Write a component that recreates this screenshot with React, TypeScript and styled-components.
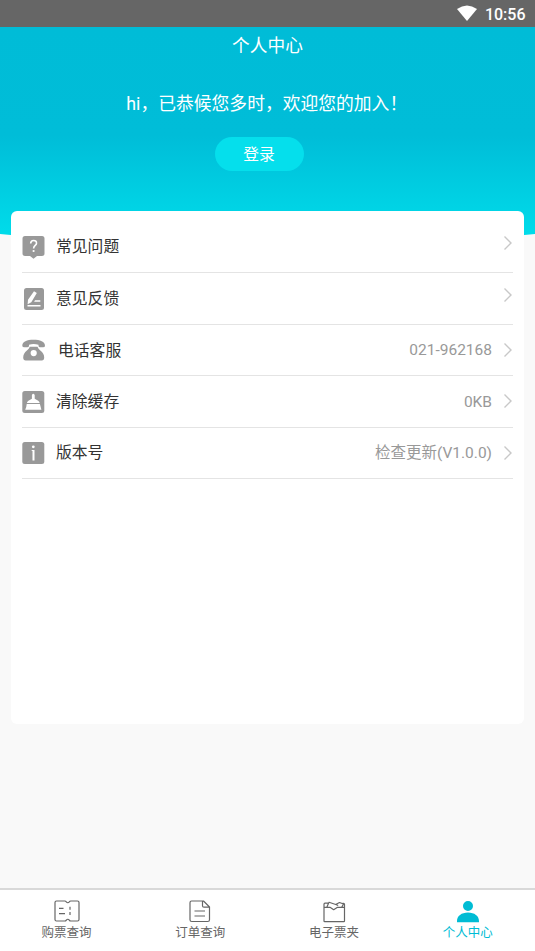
import React from "react";
import styled, { createGlobalStyle } from "styled-components";

const GlobalStyle = createGlobalStyle`
  * { box-sizing: border-box; }
  body {
    margin: 0;
    background: #f9f9f9;
    font-family: Roboto, "Noto Sans CJK SC", sans-serif;
  }
`;

const Screen = styled.div`
  width: 535px;
  height: 951px;
  display: flex;
  flex-direction: column;
  overflow: hidden;
  background: #f9f9f9;
`;

const StatusBar = styled.div`
  height: 27px;
  flex: none;
  display: flex;
  justify-content: flex-end;
  align-items: center;
  gap: 8px;
  padding: 2px 9.5px 0 0;
  background: #666;
  color: #fff;
  font-size: 16px;
  font-weight: 500;
  line-height: 24px;
`;

const WifiIcon = styled.svg`
  width: 20px;
  height: 16px;
  margin-top: -3px;
`;

const Hero = styled.header`
  height: 209px;
  flex: none;
  display: flex;
  flex-direction: column;
  align-items: center;
  background: linear-gradient(#00bcd7 0%, #00bdd8 52%, #00dcea 100%);
  clip-path: polygon(0 0, 100% 0, 100% 207px, 96% 209px, 4% 209px, 0 207px);
  color: #fff;
`;

const Title = styled.h1`
  margin: 6px 0 0;
  font-size: 17.7px;
  line-height: 26px;
  font-weight: 400;
`;

const Greeting = styled.p`
  margin: 32px 0 0;
  padding-right: 1.5px;
  font-size: 17.8px;
  line-height: 26px;
  white-space: nowrap;
`;

const LoginButton = styled.button`
  width: 89px;
  height: 34px;
  margin: 20px 17px 0 0;
  padding: 2px 0 0;
  border: 0;
  border-radius: 17px;
  background: #05dfec;
  color: #fff;
  font-family: inherit;
  font-size: 15.8px;
  line-height: 32px;
`;

const Card = styled.main`
  height: 513px;
  flex: none;
  margin: -25px 11px 0;
  padding: 10.5px 11px 0;
  border-radius: 6px;
  background: #fff;
  position: relative;
`;

const Row = styled.div`
  height: 51.55px;
  display: flex;
  align-items: center;
  border-bottom: 1.5px solid #e4e4e4;
`;

const RowIcon = styled.svg`
  width: 23px;
  height: 24px;
  flex: none;
  margin-top: 1px;
`;

const Label = styled.span<{ $indent?: number }>`
  margin-left: ${(p) => 11 + (p.$indent ?? 0)}px;
  flex: 1;
  color: #333;
  font-size: 15.8px;
  line-height: 24px;
  padding-top: ${(p) => (p.$indent ? 2 : 1)}px;
`;

const Value = styled.span`
  color: #999;
  font-size: 15.5px;
  line-height: 24px;
  padding-top: 1px;
  margin-right: 11px;
`;

const Chevron = styled.svg<{ $raised?: boolean }>`
  width: 10px;
  height: 16px;
  margin-top: ${(p) => (p.$raised ? "-7px" : "0")};
  fill: none;
  stroke: #c8c8c8;
  stroke-width: 1.4;
`;

const TabBar = styled.nav`
  height: 63px;
  flex: none;
  margin-top: auto;
  display: grid;
  grid-template-columns: repeat(4, 1fr);
  border-top: 2px solid #d9d9d9;
  background: #fff;
`;

const Tab = styled.div<{ $active?: boolean }>`
  display: flex;
  flex-direction: column;
  align-items: center;
  padding: 8px 0.5px 0 0;
  color: ${(p) => (p.$active ? "#00bcd4" : "#666")};
  font-size: 12.5px;
  line-height: 20px;
`;

const TabIcon = styled.svg`
  width: 28px;
  height: 25px;
  fill: none;
  stroke: currentColor;
  stroke-width: 1.2;
  stroke-linejoin: round;
`;

const icons = {
  question: (
    <>
      <path fill="#999" d="M3 1h17q2.500 0 2.500 2.500v15q0 2.500-2.500 2.500h-5l-3.500 2.800L8 21H3Q.5 21 .5 18.500v-15Q.5 1 3 1z" />
      <path fill="none" stroke="#fff" strokeWidth="1.600" d="M8.700 8.500q0-3 2.900-3t2.900 2.700c0 2.300-2.900 2.300-2.900 5.300" />
      <circle cx="11.600" cy="16" r="1.100" fill="#fff" />
    </>
  ),
  feedback: (
    <>
      <rect x="2" y="1" width="20" height="22" rx="2.500" fill="#999" />
      <path fill="#fff" d="M12 4.200l2.800 1.700-5.500 9.300-3.700 2.100.4-4.500zM13 13.200h5.300v1.500h-6.200zM5.500 18h13v1.600h-13z" />
    </>
  ),
  phone: (
    <>
      <path fill="#999" d="M.3 7.800C.3 3.600 5 1.800 11.500 1.800S23 3.600 23 7.800q0 1.500-2 1.500h-2.800q-1.700 0-1.700-1.500V6.700Q11.500 5.500 7 6.700v1.100Q7 9.300 5.200 9.300H2.500Q.3 9.300 .3 7.800z" />
      <path fill="#999" fillRule="evenodd" d="M7.800 8.800h7.700q.8 2 2.800 3.700 3.900 3 3.900 7 0 3-2.500 3h-16q-2.500 0-2.500-3 0-4 3.700-7 2.200-1.700 2.900-3.700zM11.700 12a3.100 3.100 0 1 0 0 6.200 3.100 3.100 0 0 0 0-6.200z" />
    </>
  ),
  broom: (
    <>
      <rect x=".3" y="1" width="22" height="22" rx="2.500" fill="#999" />
      <path fill="#fff" d="M9.900 5q1.400-2.400 2.800 0v3.700l3.500 2q1.200.7 1.500 2.400H4.900q.3-1.700 1.500-2.400l3.500-2zM4.700 14h13.200l1.500 5.800H3.200q1.300-2.400 1.500-5.800z" />
    </>
  ),
  info: (
    <>
      <rect x=".3" y="1" width="22" height="22" rx="2.500" fill="#999" />
      <circle cx="11.300" cy="5.800" r="1.400" fill="#fff" />
      <path fill="#fff" d="M9.700 9h2.800v10.500h-2V10h-.8z" />
    </>
  ),
};

interface MenuItem {
  icon: keyof typeof icons;
  label: string;
  value?: string;
  indent?: number;
}

const menu: MenuItem[] = [
  { icon: "question", label: "常见问题" },
  { icon: "feedback", label: "意见反馈" },
  { icon: "phone", label: "电话客服", value: "021-962168", indent: 2 },
  { icon: "broom", label: "清除缓存", value: "0KB" },
  { icon: "info", label: "版本号", value: "检查更新(V1.0.0)" },
];

const tabs = [
  {
    label: "购票查询",
    icon: <path d="M3.500 3h8.300q1 0 1.500.9 1.500 1.700 3 0 .5-.9 1.500-.9h6.700q1.500 0 1.500 1.500v17q0 1.500-1.500 1.500h-6.700q-1 0-1.500-.9-1.500-1.700-3 0-.5.900-1.500.900H3.500Q2 23 2 21.500v-17Q2 3 3.500 3zM6 10.300h4.500M6 15.700h6M17 8.700v3M17 14v3" />,
  },
  {
    label: "订单查询",
    icon: <path d="M5.500 3h12l6 6v12.700q0 1.800-1.800 1.800H5.800q-1.800 0-1.800-1.800v-17Q4 3 5.500 3zM16.500 3.200v4.500q0 1.500 1.500 1.500h5.300M8.500 13h10.500M8.500 18h10.500" />,
  },
  {
    label: "电子票夹",
    icon: <path d="M4 9.300h6l3.700 2.400 3.800-2.400H24.500v13.700q0 .7-.7.700H4.700q-.7 0-.7-.7zM4 9.300V6.200q0-1 1-1h3M6.800 9.200L9 4.300l6.700 2.200 3.800-2 4 1.500-1.800 3.200M15.700 6.500l2.500 1M22.500 5.300h1q1 0 1 1v3" />,
  },
  {
    label: "个人中心",
    active: true,
    icon: <path fill="currentColor" stroke="none" d="M14 3a5 5 0 1 1 0 10 5 5 0 0 1 0-10zM3 24v-1c0-5 4.500-8.500 11-8.500s11 3.500 11 8.500v1q0 .3-.5.300h-21Q3 24.300 3 24z" />,
  },
];

export default function App() {
  return (
    <>
      <GlobalStyle />
      <Screen>
        <StatusBar>
          <WifiIcon viewBox="0 0 20 16">
            <path fill="#fff" d="M0 4Q10-3.200 20 4L10 16z" />
          </WifiIcon>
          <span>10:56</span>
        </StatusBar>
        <Hero>
          <Title>个人中心</Title>
          <Greeting>hi，已恭候您多时，欢迎您的加入！</Greeting>
          <LoginButton>登录</LoginButton>
        </Hero>
        <Card>
          {menu.map((item) => (
            <Row key={item.label}>
              <RowIcon viewBox="0 0 23 24">{icons[item.icon]}</RowIcon>
              <Label $indent={item.indent}>{item.label}</Label>
              {item.value && <Value>{item.value}</Value>}
              <Chevron viewBox="0 0 10 16" $raised={!item.value}>
                <path d="M1.500 1.500L8 8l-6.500 6.500" />
              </Chevron>
            </Row>
          ))}
        </Card>
        <TabBar>
          {tabs.map((tab) => (
            <Tab key={tab.label} $active={tab.active}>
              <TabIcon viewBox="0 0 28 25">{tab.icon}</TabIcon>
              {tab.label}
            </Tab>
          ))}
        </TabBar>
      </Screen>
    </>
  );
}
